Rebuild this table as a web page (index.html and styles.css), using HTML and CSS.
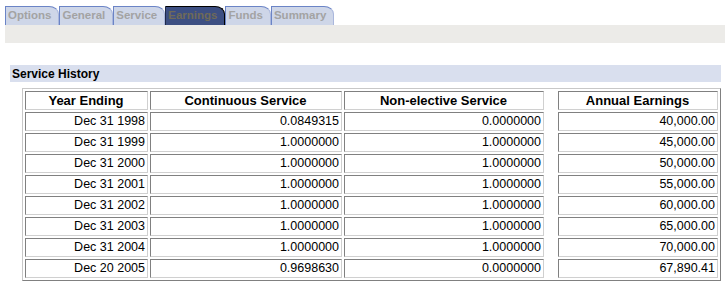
FILE: index.html
```html
<!DOCTYPE html>
<html>
<head>
<meta charset="utf-8">
<link rel="stylesheet" href="styles.css">
</head>
<body>
<div class="tabs">
  <div class="tab">Options</div>
  <div class="tab">General</div>
  <div class="tab">Service</div>
  <div class="tab active">Earnings</div>
  <div class="tab">Funds</div>
  <div class="tab">Summary</div>
</div>
<div class="toolbar"></div>
<div class="section-title">Service History</div>
<table class="grid">
  <colgroup>
    <col class="c1"><col class="c2"><col class="c3"><col class="cs"><col class="c4">
  </colgroup>
  <thead>
    <tr><th>Year Ending</th><th>Continuous Service</th><th>Non-elective Service</th><td class="sp"></td><th>Annual Earnings</th></tr>
  </thead>
  <tbody>
    <tr><td>Dec 31 1998</td><td>0.0849315</td><td>0.0000000</td><td class="sp"></td><td>40,000.00</td></tr>
    <tr><td>Dec 31 1999</td><td>1.0000000</td><td>1.0000000</td><td class="sp"></td><td>45,000.00</td></tr>
    <tr><td>Dec 31 2000</td><td>1.0000000</td><td>1.0000000</td><td class="sp"></td><td>50,000.00</td></tr>
    <tr><td>Dec 31 2001</td><td>1.0000000</td><td>1.0000000</td><td class="sp"></td><td>55,000.00</td></tr>
    <tr><td>Dec 31 2002</td><td>1.0000000</td><td>1.0000000</td><td class="sp"></td><td>60,000.00</td></tr>
    <tr><td>Dec 31 2003</td><td>1.0000000</td><td>1.0000000</td><td class="sp"></td><td>65,000.00</td></tr>
    <tr><td>Dec 31 2004</td><td>1.0000000</td><td>1.0000000</td><td class="sp"></td><td>70,000.00</td></tr>
    <tr><td>Dec 20 2005</td><td>0.9698630</td><td>0.0000000</td><td class="sp"></td><td>67,890.41</td></tr>
  </tbody>
</table>
</body>
</html>
```
FILE: styles.css
```css
html, body {
  margin: 0;
  padding: 0;
  background: #ffffff;
  font-family: "Liberation Sans", Arial, sans-serif;
}
.tabs {
  display: flex;
  align-items: flex-end;
  margin: 6px 0 0 5px;
  height: 19px;
}
.tab {
  box-sizing: border-box;
  height: 19px;
  padding: 0 7px 0 2px;
  background: #ced6e8;
  border: 1px solid #6b84c6;
  border-bottom: none;
  border-right-color: #aab7dc;
  border-top-right-radius: 10px 8px;
  color: #a3a3a3;
  font-weight: bold;
  font-size: 11.5px;
  line-height: 17px;
  white-space: nowrap;
}
.tab.active {
  background: #3d4f82;
  border-color: #1f2a48;
  border-right-color: #000000;
  border-top-color: #000000;
  color: #6f6a58;
}
.toolbar {
  margin-left: 5px;
  height: 18px;
  background: #ecebe8;
}
.section-title {
  margin: 22px 0 0 10px;
  width: 711px;
  height: 17px;
  padding-left: 2px;
  box-sizing: border-box;
  background: #d9dfee;
  font-weight: bold;
  font-size: 12px;
  line-height: 18px;
  color: #000000;
}
.grid {
  margin: 6px 0 0 22px;
  border-collapse: separate;
  border-spacing: 2px;
  table-layout: fixed;
  width: 699px;
  border: 1px solid;
  border-color: #c8c8c8 #808080 #808080 #c8c8c8;
}
.grid col.c1 { width: 123px; }
.grid col.c2 { width: 192px; }
.grid col.c3 { width: 200px; }
.grid col.cs { width: 10px; }
.grid col.c4 { width: 160px; }
.grid th, .grid td {
  box-sizing: border-box;
  height: 19px;
  padding: 0 2px 0 1px;
  border: 1px solid;
  border-color: #808080 #d0d0d0 #d0d0d0 #808080;
  font-size: 12.5px;
  line-height: 17px;
  color: #000000;
  text-align: right;
  white-space: nowrap;
}
.grid th {
  text-align: center;
  font-weight: bold;
  font-size: 13px;
}
.grid td.sp {
  border: none;
  padding: 0;
}
```
